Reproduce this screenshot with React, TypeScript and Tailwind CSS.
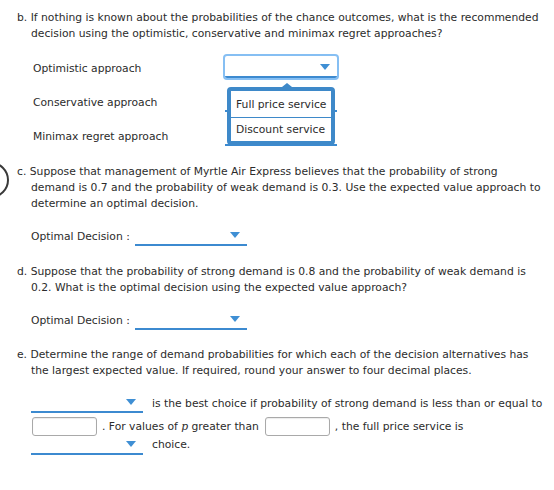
import React from "react";
import clsx from "clsx";

function Caret() {
  return (
    <span className="block h-0 w-0 border-l-[5.5px] border-r-[5.5px] border-t-[6px] border-l-transparent border-r-transparent border-t-[#3f8fd4]" />
  );
}

function Dropdown({ className, focused }: { className?: string; focused?: boolean }) {
  return (
    <div
      className={clsx(
        "flex w-[112px] shrink-0 items-end justify-end border-b-2 border-[#3c8ad0] pb-[6px] pr-[7px]",
        focused && "rounded-[2px] ring-2 ring-[#86bff3]",
        className
      )}
    >
      <Caret />
    </div>
  );
}

function ApproachRow({ label, focused }: { label: string; focused?: boolean }) {
  return (
    <div className="flex items-end">
      <span className="mb-[1px] w-[192px]">{label}</span>
      <Dropdown className="h-[22px]" focused={focused} />
    </div>
  );
}

function DecisionRow() {
  return (
    <div className="flex items-end">
      <span className="mb-[1px] w-[104px] whitespace-nowrap">Optimal Decision :</span>
      <Dropdown className="h-[22px]" />
    </div>
  );
}

function NumberBox() {
  return (
    <span className="block h-[19px] w-[65px] shrink-0 rounded-[3px] border border-[#a9a9a9] bg-white shadow-[inset_0_1px_1px_rgba(0,0,0,0.08)]" />
  );
}

export default function App() {
  return (
    <div className="relative h-[490px] w-[554px] overflow-hidden bg-white pl-[17px] pt-[10px] font-['DejaVu_Sans',sans-serif] text-[10.75px] leading-[16px] text-[#2b2b2b]">
      {/* cut-off round button at the left edge */}
      <span className="absolute left-[-27px] top-[162px] h-[36px] w-[36px] rounded-full border-[2.5px] border-[#3a3a3a]" />

      <p className="whitespace-nowrap pl-[14px] -indent-[14px]">
        b. If nothing is known about the probabilities of the chance outcomes, what is the recommended
        <br />
        decision using the optimistic, conservative and minimax regret approaches?
      </p>

      <div className="ml-[16px] mt-[14px] flex flex-col gap-[12px]">
        <ApproachRow label="Optimistic approach" focused />
        <ApproachRow label="Conservative approach" />
        <ApproachRow label="Minimax regret approach" />
      </div>

      <p className="mt-[18px] whitespace-nowrap pl-[14px] -indent-[14px]">
        c. Suppose that management of Myrtle Air Express believes that the probability of strong
        <br />
        demand is 0.7 and the probability of weak demand is 0.3. Use the expected value approach to
        <br />
        determine an optimal decision.
      </p>
      <div className="ml-[14px] mt-[12px]">
        <DecisionRow />
      </div>

      <p className="mt-[18px] whitespace-nowrap pl-[14px] -indent-[14px]">
        d. Suppose that the probability of strong demand is 0.8 and the probability of weak demand is
        <br />
        0.2. What is the optimal decision using the expected value approach?
      </p>
      <div className="ml-[14px] mt-[12px]">
        <DecisionRow />
      </div>

      <p className="mt-[17px] whitespace-nowrap pl-[14px] -indent-[14px]">
        e. Determine the range of demand probabilities for which each of the decision alternatives has
        <br />
        the largest expected value. If required, round your answer to four decimal places.
      </p>
      <div className="ml-[14px] mt-[12px] flex flex-col whitespace-nowrap">
        <div className="flex items-end">
          <Dropdown className="h-[22px]" />
          <span className="mb-[1px] ml-[9px]">
            is the best choice if probability of strong demand is less than or equal to
          </span>
        </div>
        <div className="mt-[4px] flex items-center">
          <span className="ml-[1px]">
            <NumberBox />
          </span>
          <span className="ml-[5px]">
            . For values of <span className="font-['DejaVu_Serif',serif] italic">p</span> greater than
          </span>
          <span className="ml-[6px]">
            <NumberBox />
          </span>
          <span className="ml-[5px]">, the full price service is</span>
        </div>
        <div className="flex items-end">
          <Dropdown className="h-[19px]" />
          <span className="mb-[2px] ml-[9px]">choice.</span>
        </div>
      </div>

      {/* open list of the focused dropdown */}
      <div className="absolute left-[227px] top-[87px] w-[108px] rounded-[4px] border-4 border-[#3e89c9] bg-white">
        <span className="absolute left-[51px] top-[-8px] h-0 w-0 border-b-[4px] border-l-[5px] border-r-[5px] border-b-[#3e89c9] border-l-transparent border-r-transparent" />
        <div className="whitespace-nowrap pb-[4px] pl-[5px] pt-[6px]">Full price service</div>
        <div className="h-px bg-[#3e89c9]" />
        <div className="whitespace-nowrap pb-[3px] pl-[5px] pt-[4px]">Discount service</div>
      </div>
    </div>
  );
}
